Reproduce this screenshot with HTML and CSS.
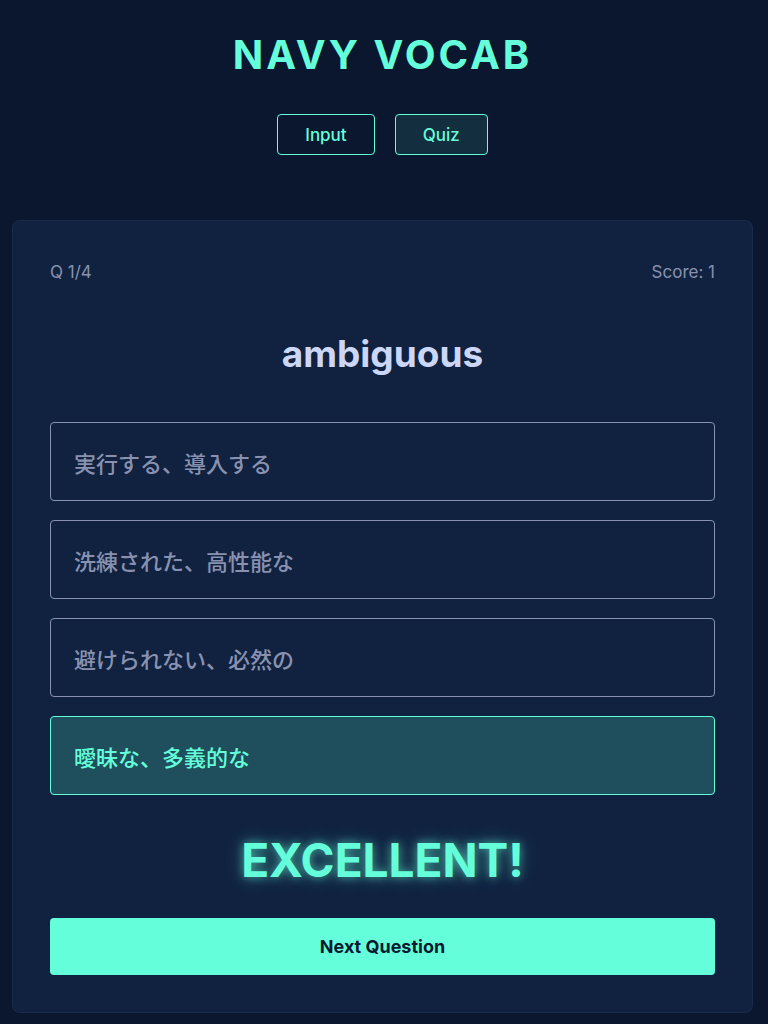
FILE: index.html
```html
<!DOCTYPE html>
<html lang="ja">
<head>
<meta charset="utf-8">
<title>Navy Vocab</title>
<link rel="stylesheet" href="styles.css">
</head>
<body>
<div class="app">
  <header class="header">
    <h1 class="title">NAVY VOCAB</h1>
    <nav class="tabs">
      <button class="tab">Input</button>
      <button class="tab tab-active">Quiz</button>
    </nav>
  </header>
  <main class="card">
    <div class="meta">
      <span>Q 1/4</span>
      <span>Score: 1</span>
    </div>
    <h2 class="word">ambiguous</h2>
    <div class="options">
      <button class="option">実行する、導入する</button>
      <button class="option">洗練された、高性能な</button>
      <button class="option">避けられない、必然の</button>
      <button class="option option-correct">曖昧な、多義的な</button>
    </div>
    <div class="result">EXCELLENT!</div>
    <button class="next">Next Question</button>
  </main>
</div>
</body>
</html>
```
FILE: styles.css
```css
* { box-sizing: border-box; }
html, body {
  margin: 0;
  padding: 0;
  background: #0b172e;
  font-family: Inter, "Noto Sans CJK JP", sans-serif;
}
.app {
  padding: 0 15px 0 12px;
  min-height: 1024px;
}
.header {
  display: flex;
  flex-direction: column;
  align-items: center;
  padding-top: 33px;
}
.title {
  margin: 0;
  font-size: 40px;
  line-height: 44px;
  font-weight: 700;
  letter-spacing: 3px;
  color: #64ffda;
}
.tabs {
  display: flex;
  gap: 20px;
  margin-top: 37px;
}
.tab {
  height: 41px;
  padding: 0 27px;
  background: transparent;
  border: 1px solid #64ffda;
  border-radius: 4px;
  color: #64ffda;
  font-family: Inter, sans-serif;
  font-size: 17px;
  font-weight: 500;
}
.tab-active {
  background: rgba(100, 255, 218, 0.1);
}
.card {
  margin-top: 65px;
  background: #112240;
  border: 1px solid rgba(136, 146, 176, 0.08);
  border-radius: 8px;
  padding: 40px 37px 37px;
  display: flex;
  flex-direction: column;
}
.meta {
  display: flex;
  justify-content: space-between;
  color: #8892b0;
  font-size: 17px;
  line-height: 22px;
}
.word {
  margin: 49px 0 0;
  text-align: center;
  color: #ccd6f6;
  font-size: 37px;
  line-height: 44px;
  font-weight: 700;
}
.options {
  margin-top: 46px;
  display: flex;
  flex-direction: column;
  gap: 19px;
}
.option {
  height: 79px;
  text-align: left;
  padding: 0 23px;
  background: transparent;
  border: 1px solid #8892b0;
  border-radius: 4px;
  color: #8892b0;
  font-family: Inter, "Noto Sans CJK JP", sans-serif;
  font-size: 22px;
  font-weight: 500;
}
.option-correct {
  background: #1f4f5c;
  border-color: #64ffda;
  color: #64ffda;
}
.result {
  margin-top: 37px;
  text-align: center;
  font-size: 46px;
  line-height: 56px;
  font-weight: 700;
  color: #64ffda;
  text-shadow: 0 0 10px rgba(100, 255, 218, 0.6), 0 0 20px rgba(100, 255, 218, 0.3);
}
.next {
  margin-top: 30px;
  height: 57px;
  background: #64ffda;
  border: none;
  border-radius: 4px;
  color: #0a192f;
  font-family: Inter, sans-serif;
  font-size: 18px;
  font-weight: 700;
}
```
